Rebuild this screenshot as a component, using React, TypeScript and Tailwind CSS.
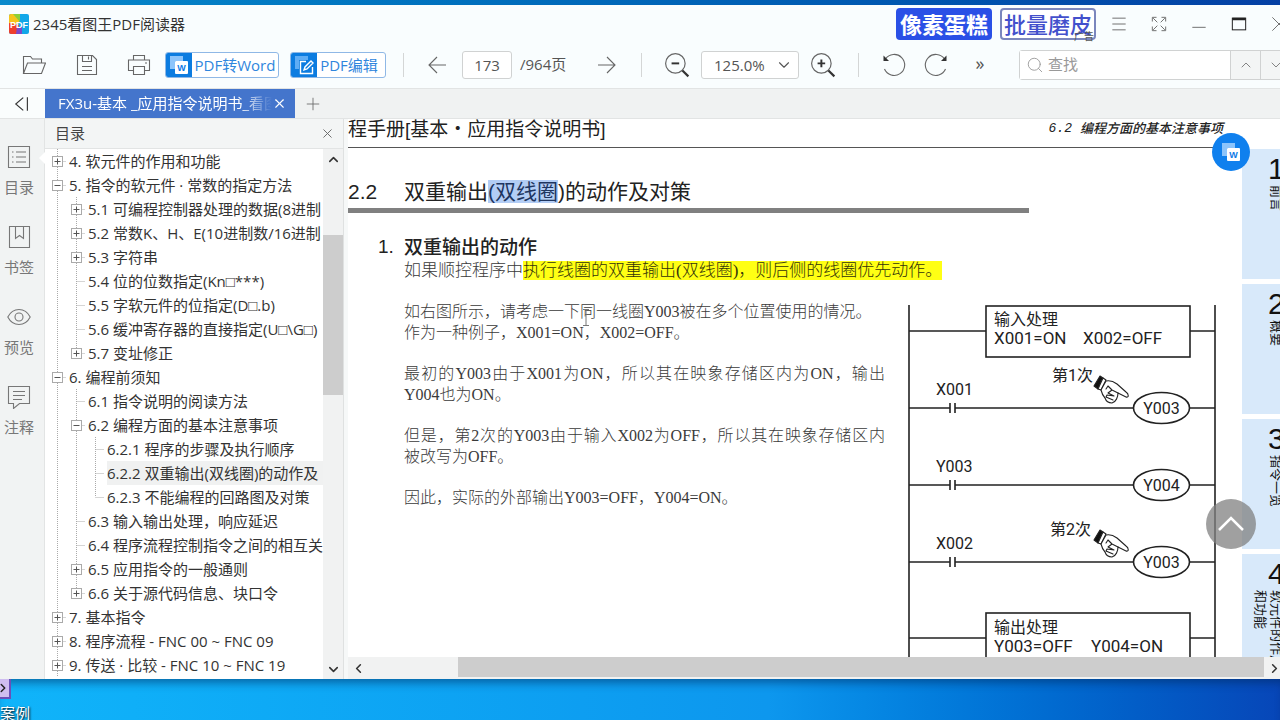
import React from "react";
import { ChevronDown, ChevronUp, ChevronLeft, ChevronRight, Plus, Search, X } from "lucide-react";

type TreeRow = {
  level: number;
  label: string;
  state?: "open" | "closed";
  last?: boolean;
  selected?: boolean;
};

const tree: TreeRow[] = [
  { level: 0, label: "4. 软元件的作用和功能", state: "closed" },
  { level: 0, label: "5. 指令的软元件 · 常数的指定方法", state: "open" },
  { level: 1, label: "5.1 可编程控制器处理的数据(8进制", state: "closed" },
  { level: 1, label: "5.2 常数K、H、E(10进制数/16进制", state: "closed" },
  { level: 1, label: "5.3 字符串", state: "closed" },
  { level: 1, label: "5.4 位的位数指定(Kn□***)" },
  { level: 1, label: "5.5 字软元件的位指定(D□.b)" },
  { level: 1, label: "5.6 缓冲寄存器的直接指定(U□\\G□)" },
  { level: 1, label: "5.7 变址修正", state: "closed", last: true },
  { level: 0, label: "6. 编程前须知", state: "open" },
  { level: 1, label: "6.1 指令说明的阅读方法" },
  { level: 1, label: "6.2 编程方面的基本注意事项", state: "open" },
  { level: 2, label: "6.2.1 程序的步骤及执行顺序" },
  { level: 2, label: "6.2.2 双重输出(双线圈)的动作及", selected: true },
  { level: 2, label: "6.2.3 不能编程的回路图及对策", last: true },
  { level: 1, label: "6.3 输入输出处理，响应延迟" },
  { level: 1, label: "6.4 程序流程控制指令之间的相互关" },
  { level: 1, label: "6.5 应用指令的一般通则", state: "closed" },
  { level: 1, label: "6.6 关于源代码信息、块口令", state: "closed", last: true },
  { level: 0, label: "7. 基本指令", state: "closed" },
  { level: 0, label: "8. 程序流程 - FNC 00 ~ FNC 09", state: "closed" },
  { level: 0, label: "9. 传送 · 比较 - FNC 10 ~ FNC 19", state: "closed" },
];

const chapters = [
  { no: "1", title: "前言" },
  { no: "2", title: "概要" },
  { no: "3", title: "指令一览" },
  { no: "4", title: "软元件的作用\n和功能" },
];

const IconButton: React.FC<{ label: string; className?: string; children: React.ReactNode }> = ({
  label,
  className = "",
  children,
}) => (
  <button aria-label={label} className={`flex shrink-0 items-center justify-center text-[#666] ${className}`}>
    {children}
  </button>
);

const Separator: React.FC<{ className?: string }> = ({ className = "" }) => (
  <span className={`h-6 w-px shrink-0 bg-[#d4d6d6] ${className}`} />
);

const Stroke: React.FC<{ size?: number; children: React.ReactNode }> = ({ size = 24, children }) => (
  <svg width={size} height={size} viewBox="0 0 24 24" fill="none" stroke="currentColor" strokeWidth="1.1">
    {children}
  </svg>
);

const WordGlyph: React.FC = () => (
  <svg width="20" height="20" viewBox="0 0 20 20">
    <path d="M1 1h13v5H6v8H1z" fill="#8cc4fb" />
    <rect x="6" y="6" width="13" height="13" rx="1" fill="#fff" />
    <text x="12.5" y="16" textAnchor="middle" fontSize="9" fontWeight="700" fill="#0c7ae6" fontFamily="Liberation Sans">
      W
    </text>
  </svg>
);

const TitleBar: React.FC = () => (
  <header className="flex h-[38px] shrink-0 items-center pl-[9px]">
    <svg width="20" height="20" viewBox="0 0 20 20">
      <rect width="20" height="20" rx="2" fill="#12a7e8" />
      <path d="M0 2a2 2 0 0 1 2-2h8v9L0 14z" fill="#f6c51c" />
      <path d="M4 0h7v8z" fill="#8ccf3a" />
      <path d="M0 9l10 2-2 9H2a2 2 0 0 1-2-2z" fill="#ee3f2c" />
      <path d="M8 13l5 0 0 7H7z" fill="#7b49c9" />
      <text x="10" y="14" textAnchor="middle" fontSize="9" fontWeight="700" fill="#fff" fontFamily="Liberation Sans">
        PDF
      </text>
    </svg>
    <h1 className="ml-1 text-[15px] text-[#333]">2345看图王PDF阅读器</h1>

    <div className="ml-auto flex items-center pr-px">
      <button className="h-8 w-24 rounded-sm bg-[#2a50e6] text-[22px] leading-8 font-bold whitespace-nowrap text-white">
        像素蛋糕
      </button>
      <button className="relative ml-2 h-8 w-24 rounded-sm border-2 border-[#7b86bd] bg-white text-[22px] leading-7 font-medium whitespace-nowrap text-[#4350cc]">
        批量磨皮
        <span className="absolute right-0 -bottom-1 text-[10px] leading-3 font-normal text-[#555]">广告</span>
      </button>
      <IconButton label="菜单" className="ml-[3px] w-10">
        <Stroke size={20}>
          <path d="M4 5h16M4 12h16M4 19h16" />
        </Stroke>
      </IconButton>
      <IconButton label="全屏" className="w-10">
        <Stroke size={20}>
          <path d="M4 9V4h5M15 4h5v5M20 15v5h-5M9 20H4v-5M5 5l5 5M19 5l-5 5M19 19l-5-5M5 19l5-5" />
        </Stroke>
      </IconButton>
      <IconButton label="最小化" className="w-10">
        <Stroke size={20}>
          <path d="M4 16h16" />
        </Stroke>
      </IconButton>
      <IconButton label="最大化" className="w-10">
        <svg width="20" height="20" viewBox="0 0 24 24" fill="none" stroke="#222" strokeWidth="1.200">
          <rect x="4" y="5" width="16" height="14" />
          <path d="M4 6h16" strokeWidth="3" />
        </svg>
      </IconButton>
      <IconButton label="关闭" className="w-10">
        <Stroke size={20}>
          <path d="M4 4l16 16M20 4L4 20" />
        </Stroke>
      </IconButton>
    </div>
  </header>
);

const Toolbar: React.FC = () => (
  <div className="flex h-[45px] shrink-0 items-center pb-0.5 pl-4 text-[15px] text-[#555]">
    <IconButton label="打开" className="w-9">
      <Stroke>
        <path d="M1.500 20.500V3.500h7l2 2.500h9v4M1.500 20.500L5.500 10h18L19.500 20.500z" />
      </Stroke>
    </IconButton>
    <IconButton label="保存" className="ml-[17px] w-9">
      <Stroke>
        <path d="M2.500 2.500h15l4 4v15h-19zM7.500 2.500v6h9v-6M13.500 3.500v3M7 13.500h10M7 17.500h10" />
      </Stroke>
    </IconButton>
    <IconButton label="打印" className="ml-4 w-9">
      <Stroke>
        <path d="M6.500 7V2.500h11V7M6.500 17.500h-5V7h21v10.500h-5M6.500 13.500h11v8h-11zM18 10h2" />
      </Stroke>
    </IconButton>

    <button className="ml-2 flex h-[26px] shrink-0 overflow-hidden rounded-[3px] border border-[#8fb8e6] bg-white text-[#2f86dd]">
      <span className="flex h-full w-[26px] items-center justify-center bg-[#0c7ce0]">
        <WordGlyph />
      </span>
      <span className="w-[86px] text-center leading-6 whitespace-nowrap">PDF转Word</span>
    </button>
    <button className="ml-[11px] flex h-[26px] shrink-0 overflow-hidden rounded-[3px] border border-[#8fb8e6] bg-white text-[#2f86dd]">
      <span className="flex h-full w-[26px] items-center justify-center bg-[#0c7ce0]">
        <svg width="20" height="20" viewBox="0 0 20 20" fill="none">
          <path d="M1 1h13v4H5v9H1z" fill="#5fadf5" />
          <path d="M12 6.500H6.500v12h12V12M10 15l1-3 6-6 2 2-6 6z" stroke="#fff" strokeWidth="1.400" />
        </svg>
      </span>
      <span className="w-[68px] pr-1 text-center leading-6 whitespace-nowrap">PDF编辑</span>
    </button>

    <Separator className="ml-[17px]" />
    <IconButton label="上一页" className="ml-[21px] w-6">
      <Stroke>
        <path d="M21 12H4M12 4l-8 8 8 8" />
      </Stroke>
    </IconButton>
    <input
      aria-label="页码"
      defaultValue="173"
      className="ml-[13px] h-7 w-[50px] shrink-0 rounded-[3px] border border-[#d0d2d2] bg-white text-center"
    />
    <span className="ml-2 w-[50px] shrink-0 whitespace-nowrap">/964页</span>
    <IconButton label="下一页" className="ml-[25px] w-6">
      <Stroke>
        <path d="M3 12h17M12 4l8 8-8 8" />
      </Stroke>
    </IconButton>
    <Separator className="ml-[22px]" />
    <IconButton label="缩小" className="ml-[21px] w-7">
      <Stroke size={26}>
        <circle cx="10.500" cy="10.500" r="9" />
        <path d="M17 17l5.500 5.500" strokeWidth="2" stroke="#333" />
        <path d="M7 10.500h7" strokeWidth="1.800" stroke="#333" />
      </Stroke>
    </IconButton>
    <div className="relative ml-[10px] shrink-0">
      <select
        aria-label="缩放比例"
        className="h-7 w-[98px] appearance-none rounded-[3px] border border-[#d0d2d2] bg-white pl-3 leading-6"
      >
        <option>125.0%</option>
      </select>
      <ChevronDown size={18} strokeWidth={1.5} className="pointer-events-none absolute top-[5px] right-1.5" />
    </div>
    <IconButton label="放大" className="ml-[10px] w-7">
      <Stroke size={26}>
        <circle cx="10.500" cy="10.500" r="9" />
        <path d="M17 17l5.500 5.500" strokeWidth="2" stroke="#333" />
        <path d="M7 10.500h7M10.500 7v7" strokeWidth="1.800" stroke="#333" />
      </Stroke>
    </IconButton>
    <Separator className="ml-[21px]" />
    <IconButton label="向左旋转" className="ml-[21px] w-7">
      <Stroke>
        <path d="M3.500 6A10.500 10.500 0 1 1 2.500 16" />
        <path d="M1.500 2.500v5.500h5.500z" fill="#333" stroke="none" />
      </Stroke>
    </IconButton>
    <IconButton label="向右旋转" className="ml-[14px] w-7">
      <Stroke>
        <path d="M20.500 6A10.500 10.500 0 1 0 21.500 16" />
        <path d="M22.500 2.500v5.500h-5.500z" fill="#333" stroke="none" />
      </Stroke>
    </IconButton>
    <button aria-label="更多" className="ml-[20px] w-5 shrink-0 pb-1 text-lg leading-6">
      »
    </button>

    <div className="ml-auto flex h-[30px] w-[272px] shrink-0 rounded-[3px] border border-[#d0d2d2]">
      <label className="flex min-w-0 flex-1 items-center bg-white pl-1.5 text-[#999]">
        <Search size={18} strokeWidth={1.2} />
        <input aria-label="查找" placeholder="查找" className="ml-1 min-w-0 flex-1 placeholder:text-[#999]" />
      </label>
      <IconButton label="查找上一个" className="w-[30px] border-l border-[#d0d2d2] bg-[#f3f5f5]">
        <ChevronUp size={16} strokeWidth={1.2} />
      </IconButton>
      <IconButton label="查找下一个" className="w-[30px] border-l border-[#d0d2d2] bg-[#f3f5f5]">
        <ChevronDown size={16} strokeWidth={1.2} />
      </IconButton>
    </div>
    <span className="w-[9px] shrink-0" />
  </div>
);

const TabBar: React.FC = () => (
  <div className="flex h-[31px] shrink-0 border-y border-[#e2e4e4] bg-[#f0f2f2]">
    <IconButton label="收起" className="w-[45px] bg-[#fafdfd] pr-1">
      <Stroke size={18}>
        <path d="M15 3.500L5 12l10 8.500M20.500 3v18" strokeWidth="1.500" stroke="#333" />
      </Stroke>
    </IconButton>
    <div className="flex w-[250px] items-center bg-[#4475cc] pl-[13px] text-[15px] text-white">
      <span className="w-[214px] overflow-hidden whitespace-nowrap [mask-image:linear-gradient(to_right,black_85%,transparent)]">
        FX3u-基本 _应用指令说明书_看图
      </span>
      <button aria-label="关闭标签" className="flex">
        <X size={15} strokeWidth={1.8} />
      </button>
    </div>
    <IconButton label="新建标签" className="w-9">
      <Plus size={20} strokeWidth={1} />
    </IconButton>
  </div>
);

const Rail: React.FC = () => {
  const items = [
    { label: "目录", art: <path d="M1.500 1.500h21v21h-21zM9 7h10M9 12h10M9 17h10M5 7h1.500M5 12h1.500M5 17h1.500" /> },
    { label: "书签", art: <path d="M2.500 1.500h20v21h-20zM8.500 1.500v12l4-3 4 3v-12" /> },
    {
      label: "预览",
      art: (
        <>
          <path d="M.8 12C6 2 18 2 23.200 12 18 22 6 22 .8 12z" />
          <circle cx="12" cy="12" r="4" />
        </>
      ),
    },
    { label: "注释", art: <path d="M1.500 1.500h21v17h-10l-6 5v-5h-5zM6 6.500h12M6 10.500h12M6 14.500h9" /> },
  ];

  return (
    <nav className="relative flex w-[45px] shrink-0 flex-col border-r border-[#e2e4e4] bg-[#f1f3f3] pt-[26px] pr-[6px]">
      {items.map((item) => (
        <button key={item.label} className="flex h-20 flex-col items-center gap-1.5 text-[15px] leading-6 text-[#777]">
          <Stroke>{item.art}</Stroke>
          {item.label}
        </button>
      ))}
      <span className="absolute top-[33px] -right-px border-y-6 border-r-6 border-y-transparent border-r-white" />
    </nav>
  );
};

const Guides: React.FC<{ row: TreeRow }> = ({ row }) => {
  const width = 24 + row.level * 19;
  const x = 12.5 + row.level * 19;
  const trunks = Array.from({ length: row.level }, (_, i) => 12.5 + i * 19);

  return (
    <svg width={width} height="24" className="shrink-0" fill="none" stroke="#aaa" strokeDasharray="1 1">
      {trunks.map((t) => (
        <path key={t} d={`M${t} 0v24`} />
      ))}
      <path d={`M${x} 0v${row.last ? 12 : 24}M${x} 12.500H${width - 3}`} />
      {row.state && (
        <g strokeDasharray="none" stroke="#aaa">
          <rect x={x - 5} y="7.500" width="10" height="10" fill="#fff" />
          <path d={`M${x - 3} 12.500h6`} stroke="#555" />
          {row.state === "closed" && <path d={`M${x} 9.500v6`} stroke="#555" />}
        </g>
      )}
    </svg>
  );
};

const Outline: React.FC = () => (
  <aside className="flex w-[299px] shrink-0 flex-col border-r border-[#dfe1e1]">
    <div className="flex h-[30px] items-center justify-between border-b border-[#e2e4e4] bg-[#f3f5f5] pr-2 pl-[10px]">
      <h2 className="text-[15px] text-[#444]">目录</h2>
      <button aria-label="关闭目录" className="text-[#666]">
        <X size={15} strokeWidth={1.5} />
      </button>
    </div>
    <div className="flex min-h-0 flex-1">
      <ul className="min-w-0 flex-1 overflow-hidden bg-white font-['Open_Sans','Liberation_Sans','Noto_Sans_CJK_SC',sans-serif] text-[15px] text-[#333]">
        {tree.map((row) => (
          <li key={row.label} className="flex h-6 overflow-hidden">
            <Guides row={row} />
            <button
              className={`min-w-0 flex-1 overflow-hidden text-left leading-6 whitespace-nowrap ${
                row.selected ? "bg-[#f0f1f1]" : ""
              }`}
            >
              {row.label}
            </button>
          </li>
        ))}
      </ul>
      <div className="flex w-5 flex-col items-center bg-[#f1f2f2] text-[#333]">
        <button aria-label="向上滚动" className="h-5 shrink-0">
          <ChevronUp size={15} strokeWidth={2.5} />
        </button>
        <div className="grid w-full flex-1 grid-rows-[66fr_160fr_264fr]">
          <span />
          <span className="bg-[#cdcdcd]" />
        </div>
        <button aria-label="向下滚动" className="h-5 shrink-0">
          <ChevronDown size={15} strokeWidth={2.5} />
        </button>
      </div>
    </div>
  </aside>
);

const Hand: React.FC<{ x: number; y: number }> = ({ x, y }) => (
  <g transform={`translate(${x} ${y})`} strokeWidth="1.100" strokeLinejoin="round" strokeLinecap="round" fill="#fff">
    <path d="M6 0l3 2-5 11-4-3z" fill="#111" />
    <path d="M9 2l3 2-5 10-3-1z" />
    <path d="M12 5c4-1 7 0 11 3l9 8c3 2 3 6 0 5l-8-4c0 4-2 9-6 10-3 0-6-2-7-5-2-2-3-4-4-8z" />
    <path d="M24 17l-6-3-4-4M18 14l-4 3 6 3M20 20l-7-1-1 2 7 3M14 10l-2 3" fill="none" />
  </g>
);

const Rung: React.FC<{ y: number; contact: string; coil: string }> = ({ y, contact, coil }) => (
  <g>
    <path d={`M1 ${y}h41M47 ${y}h178M282 ${y}h25M42 ${y - 5}v10M47 ${y - 5}v10`} fill="none" />
    <ellipse cx="253.500" cy={y} rx="28" ry="15.500" fill="none" />
    <g fill="#222" stroke="none">
      <text x="28" y={y - 13}>{contact}</text>
      <text x="253.500" y={y + 6} textAnchor="middle">{coil}</text>
    </g>
  </g>
);

const Ladder: React.FC = () => (
  <svg
    width="308"
    height="370"
    viewBox="0 0 308 370"
    className="mt-[92px] shrink-0 font-['Roboto','Noto_Sans_CJK_SC',sans-serif] text-base"
    stroke="#222"
    strokeWidth="1.600"
  >
    <path d="M1 0v370M307 0v370M1 26h77M282 26h25M1 333h77M282 333h25" fill="none" />
    <rect x="78" y="1" width="204" height="51" fill="none" />
    <rect x="78" y="308" width="204" height="60" fill="none" />
    <Rung y={103} contact="X001" coil="Y003" />
    <Rung y={180} contact="Y003" coil="Y004" />
    <Rung y={257} contact="X002" coil="Y003" />
    <Hand x={186} y={71} />
    <Hand x={186} y={225} />
    <g fill="#222" stroke="none">
      <text x="86" y="20">输入处理</text>
      <text x="144" y="76">第1次</text>
      <text x="142" y="230">第2次</text>
      <text x="86" y="328">输出处理</text>
      <g className="text-[17px]">
        <text x="86" y="39">X001=ON</text>
        <text x="175" y="39">X002=OFF</text>
        <text x="86" y="347">Y003=OFF</text>
        <text x="183" y="347">Y004=ON</text>
      </g>
    </g>
  </svg>
);

const Page: React.FC = () => (
  <article className="flex min-h-0 flex-1 overflow-hidden bg-white font-['Liberation_Sans','Noto_Sans_CJK_SC',sans-serif] text-[#222]">
    <div className="min-w-0 flex-1">
      <div className="flex h-[29px] justify-between border-b border-[#555]">
        <p className="text-[19px] leading-[22px] whitespace-nowrap">程手册[基本・应用指令说明书]</p>
        <p className="flex gap-2 text-[13px] leading-5 font-medium whitespace-nowrap italic">
          <span className="font-['Liberation_Mono',monospace]">6.2</span>
          <span>编程方面的基本注意事项</span>
        </p>
      </div>
      <h2 className="mt-7 flex text-[21px] leading-8 whitespace-nowrap">
        <span className="w-14 shrink-0">2.2</span>
        <span>
          双重输出
          <mark className="bg-[#b3cdf5] text-[#1e3560]">(双线圈</mark>
          )的动作及对策
        </span>
      </h2>
      <div className="h-[5px] w-[681px] bg-[#808080]" />
      <div className="flex">
        <span className="mt-[22px] w-14 shrink-0 pl-[30px] text-[19px] leading-6">1.</span>
        <section className="mt-[22px] w-[481px] shrink-0">
          <h3 className="text-[19px] leading-[25px] font-medium">双重输出的动作</h3>
          <div className="flex flex-col gap-5 font-['Liberation_Serif','Noto_Sans_CJK_SC',serif] text-base leading-[21px] font-light text-[#3a3a3a]">
            <p className="text-[17px] whitespace-nowrap">
              如果顺控程序中
              <mark className="bg-[#ffff14] text-[#33330a]">执行线圈的双重输出(双线圈)，则后侧的线圈优先动作。</mark>
            </p>
            <p className="relative">
              如右图所示，请考虑一下同一线圈Y003被在多个位置使用的情况。
              <br />
              作为一种例子，X001=ON，X002=OFF。
              <svg width="8" height="18" className="absolute top-2 left-[178px]" fill="none" stroke="#777">
                <path d="M1 .5h6M4 .5v16M1 16.500h6" />
              </svg>
            </p>
            <p className="text-justify">最初的Y003由于X001为ON，所以其在映象存储区内为ON，输出Y004也为ON。</p>
            <p>
              <span className="block text-justify [text-align-last:justify]">
                但是，第2次的Y003由于输入X002为OFF，所以其在映象存储区内
              </span>
              被改写为OFF。
            </p>
            <p>因此，实际的外部输出Y003=OFF，Y004=ON。</p>
          </div>
        </section>
        <div className="w-[23px] shrink-0" />
        <Ladder />
      </div>
    </div>
    <div className="mt-[30px] ml-[19px] flex w-[58px] shrink-0 flex-col gap-[5px]">
      {chapters.map((c) => (
        <div key={c.no} className="h-[130px] shrink-0 overflow-hidden bg-[#d8e9fa] pt-1 text-[#111]">
          <p className="pl-[26px] text-[30px] leading-8 font-medium">{c.no}</p>
          <div className="flex justify-end pr-4">
            <p className="text-[13px] leading-4 whitespace-pre [text-orientation:sideways] [writing-mode:vertical-rl]">
              {c.title}
            </p>
          </div>
        </div>
      ))}
    </div>
  </article>
);

const Viewer: React.FC = () => (
  <main className="relative ml-1 flex min-w-0 flex-1 flex-col">
    <Page />
    <div className="flex h-[22px] shrink-0 items-stretch bg-[#f1f2f2] pr-4 text-[#333]">
      <button aria-label="向左滚动" className="flex w-5 items-center justify-center">
        <ChevronLeft size={15} strokeWidth={2.5} />
      </button>
      <div className="mb-0.5 flex flex-1 pl-[90px]">
        <span className="flex-1 bg-[#cdcdcd]" />
      </div>
      <button aria-label="向右滚动" className="flex w-5 items-center justify-center">
        <ChevronRight size={15} strokeWidth={2.5} />
      </button>
    </div>
    <button
      aria-label="转换为Word"
      className="absolute top-[14px] right-[50px] flex size-[38px] items-center justify-center rounded-full bg-[#0f80ee]"
    >
      <WordGlyph />
    </button>
    <button
      aria-label="返回顶部"
      className="absolute right-11 bottom-[130px] flex size-[50px] items-center justify-center rounded-full bg-[#808080]/75 text-white"
    >
      <svg width="28" height="16" viewBox="0 0 28 16" fill="none" stroke="currentColor" strokeWidth="2.500">
        <path d="M2 14L14 2l12 12" />
      </svg>
    </button>
  </main>
);

const App: React.FC = () => (
  <div className="flex h-screen flex-col overflow-hidden bg-linear-to-r from-[#0a8acb] to-[#0540a4] pt-[5px] font-['Open_Sans','Noto_Sans_CJK_SC',sans-serif]">
    <div className="-mr-5 flex min-h-0 flex-1 flex-col bg-[#f9fdfe]">
      <TitleBar />
      <Toolbar />
      <TabBar />
      <div className="flex min-h-0 flex-1 bg-[#f6f8f8]">
        <Rail />
        <Outline />
        <Viewer />
      </div>
    </div>
    <div className="h-[41px] shrink-0 bg-linear-to-r from-[#10b4fa] via-[#0d97ee] via-60% to-[#0746b8] shadow-[inset_0_8px_8px_-4px_rgba(0,40,90,0.5)]">
      <div className="flex h-5 w-[11px] items-center overflow-hidden border-r-2 border-b-2 border-[#6a4fb8] bg-[#cfbdf0]">
        <ChevronRight size={14} strokeWidth={2.5} className="-ml-1 shrink-0 text-[#222]" />
      </div>
      <p className="mt-1 text-[15px] leading-5 text-white [text-shadow:1px_1px_2px_black]">案例</p>
    </div>
  </div>
);

export default App;
